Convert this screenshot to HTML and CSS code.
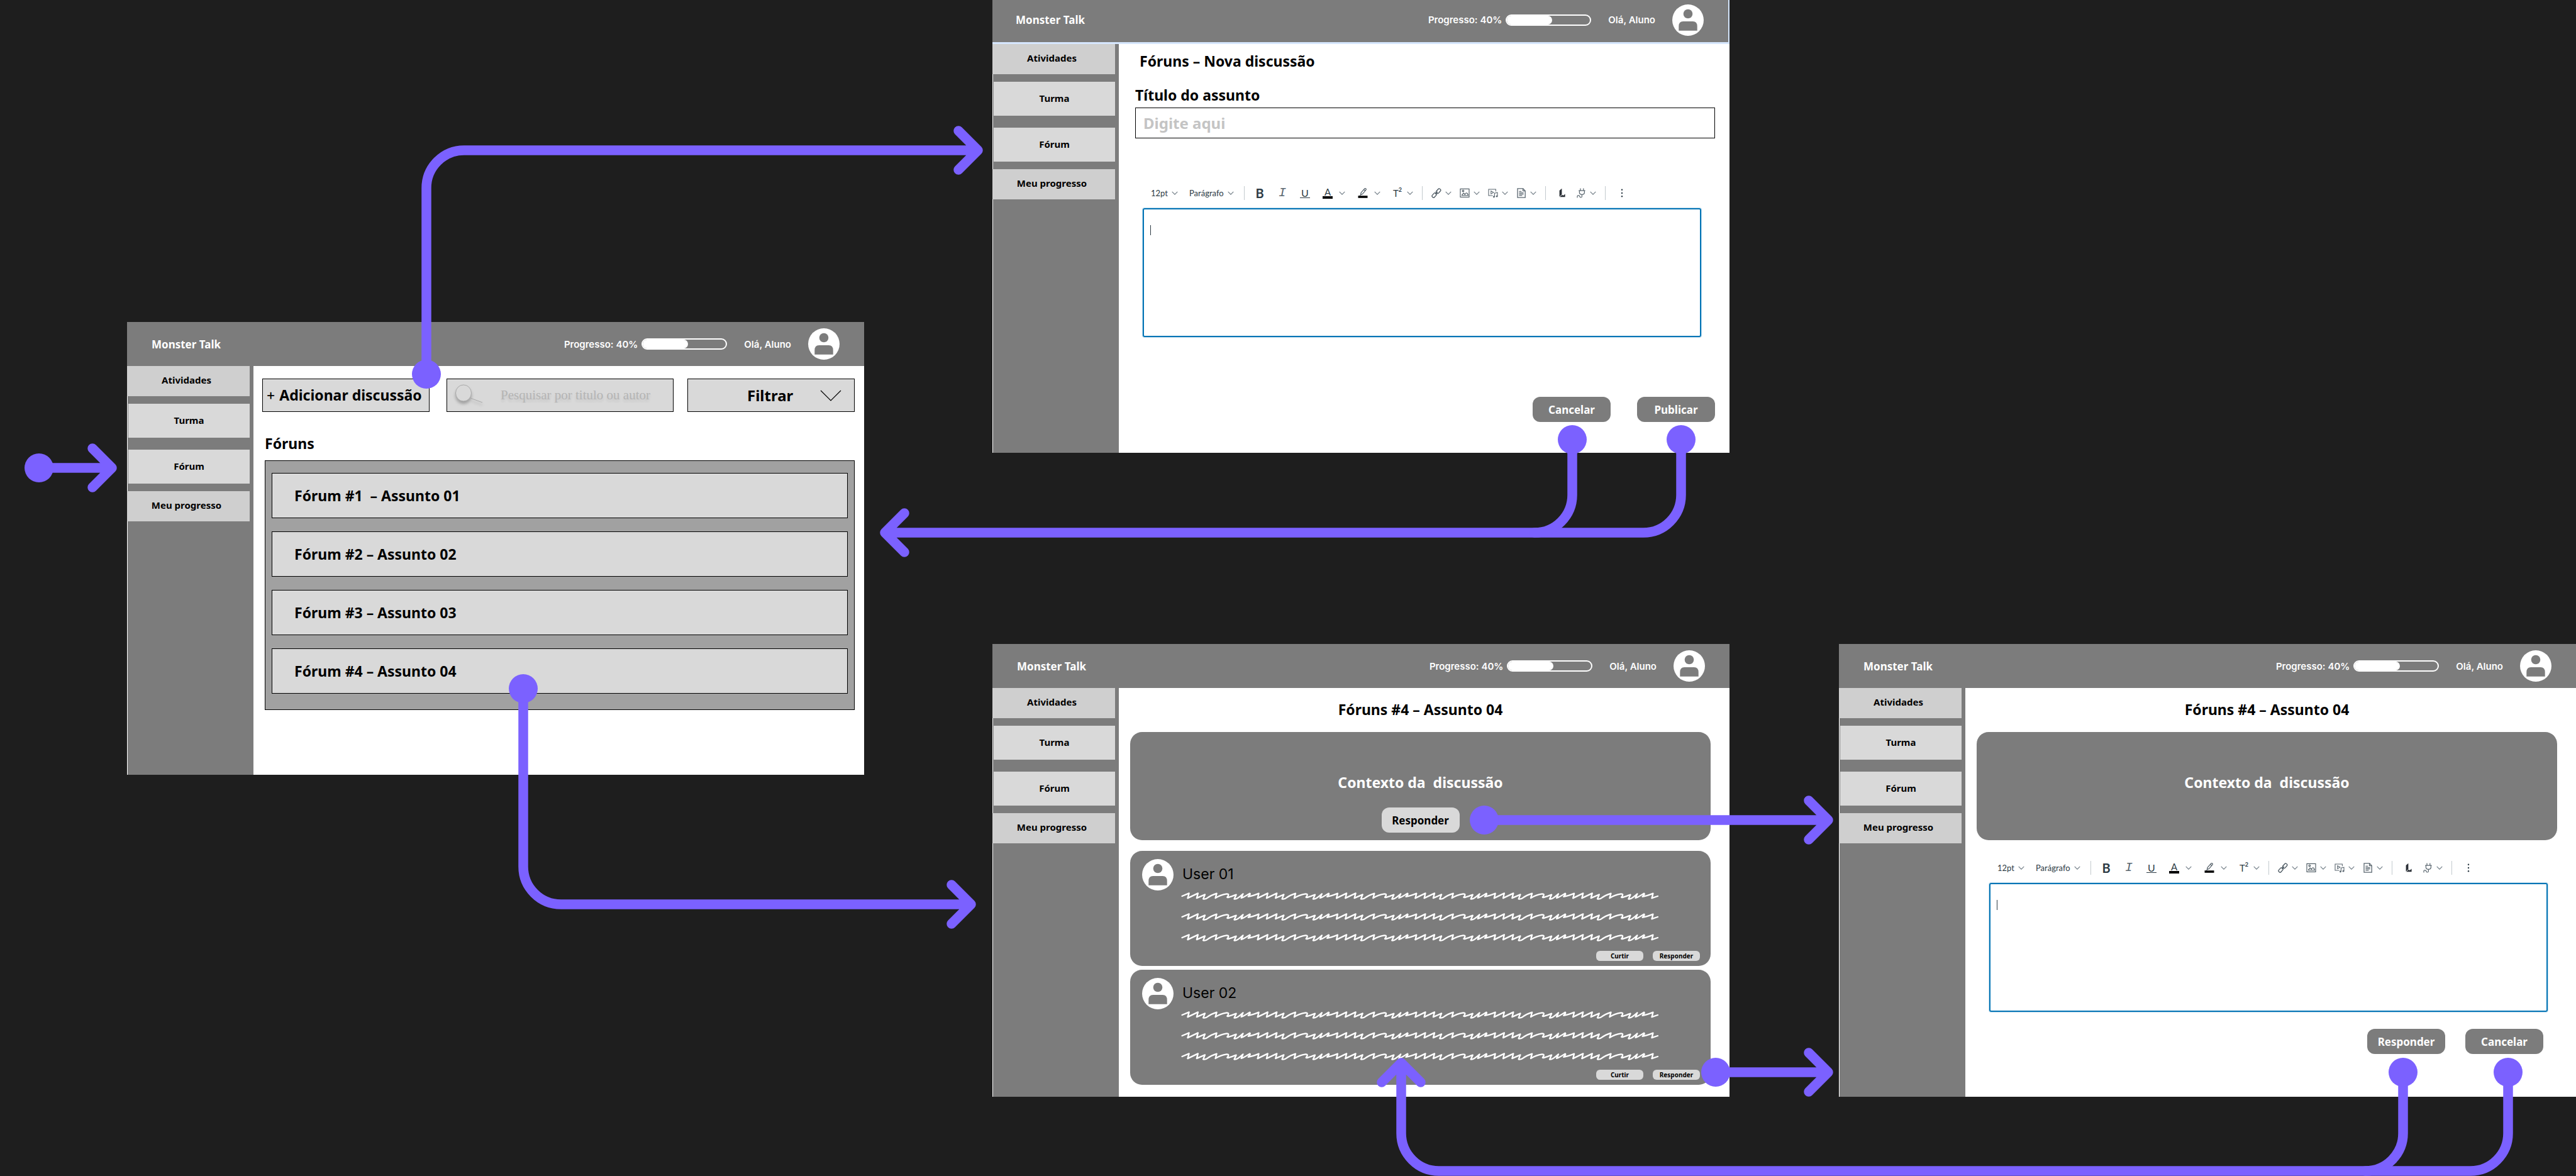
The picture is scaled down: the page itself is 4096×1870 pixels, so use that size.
FILE: index.html
```html
<!DOCTYPE html>
<html lang="pt-BR">
<head>
<meta charset="utf-8">
<title>Monster Talk – Fluxo dos fóruns</title>
<link rel="stylesheet" href="styles.css">
</head>
<body>
<svg class="sprite" aria-hidden="true">
  <symbol id="avatar" viewBox="0 0 50 50">
    <circle cx="25" cy="25" r="25" fill="#fff"/>
    <circle cx="25" cy="15" r="7.3" fill="#7c7c7c"/>
    <path d="M10.3 41.8V35q0-8 7-8h15.4q7 0 7 8v6.8z" fill="#7c7c7c"/>
  </symbol>
  <symbol id="chevron" viewBox="0 0 10 10"><path d="M.7 2.8 5 7.2l4.3-4.4" fill="none" stroke="#6f7b84" stroke-width="1.1"/></symbol>
  <symbol id="pen" viewBox="0 0 16 16">
    <path d="M4.6 10.6 3.4 12M5 7.6 10.8 1q1-.8 2 0t0 2.2L7.4 9.6l-2.8 1zM9.6 2.6l2.2 1.8" fill="none" stroke="#46535c" stroke-width="1.1"/>
    <path d="M.5 12.2h15v3.6H.5z" fill="#000"/>
  </symbol>
  <symbol id="link" viewBox="0 0 16 16">
    <g fill="none" stroke="#46535c" stroke-width="1.3">
      <rect x="-4" y="-2.3" width="8" height="4.6" rx="1.6" transform="translate(11.2 4.8) rotate(-48)"/>
      <rect x="-4" y="-2.3" width="8" height="4.6" rx="1.6" transform="translate(4.6 11.4) rotate(-48)"/>
      <path d="m6.2 9.8 3.6-3.8"/>
    </g>
  </symbol>
  <symbol id="image" viewBox="0 0 16 16">
    <g fill="none" stroke="#46535c" stroke-width="1.1">
      <rect x="1" y="1.4" width="14" height="13"/>
      <circle cx="5.4" cy="4.6" r="1.3"/>
      <path d="M3 11.8h10.4q-.6-3.6-2.6-4-1.6 0-2.4 2.4L6.2 8 3.4 11.4"/>
    </g>
  </symbol>
  <symbol id="media" viewBox="0 0 16 16">
    <g fill="none" stroke="#5b6770" stroke-width="1.1">
      <path d="M7.6 12H1V2h11.4v3.6M4.8 4.6v4.8l4-2.4zM10.4 14V8.2l4.6-1V13"/>
    </g>
    <circle cx="9.4" cy="14" r="1.4" fill="#5b6770"/><circle cx="14" cy="13.2" r="1.4" fill="#5b6770"/>
  </symbol>
  <symbol id="document" viewBox="0 0 16 16">
    <g fill="none" stroke="#5b6770" stroke-width="1.3">
      <path d="M2 .8h8.8l3.4 3.6v10.8H2zM10.6 1v3.6H14"/>
      <path d="M4.4 5.4h4M4.4 7.6h7.2M4.4 9.6h7.2M4.4 11.8h5"/>
    </g>
  </symbol>
  <symbol id="boot" viewBox="0 0 16 16"><path d="M3.6 4 7.4.8v9.4L3.6 13.8zM4 14.2l4-3.4 1.6 1.2 3-2.4v4.6z" fill="#2a2f36"/></symbol>
  <symbol id="plug" viewBox="0 0 16 16"><path d="M7 .4V4M11.8.4V4M4.2 4.2h10.4M5.4 4.4v3.2q.6 2.8 4 2.8t4-2.8V4.4M9.4 10.600v2.6q0 1.8-1.6 1.8T6 13.600t-2-1.8-2 1.8v1.8" fill="none" stroke="#5b6770" stroke-width="1.2"/></symbol>
  <symbol id="more" viewBox="0 0 16 16"><g fill="#2d3b45"><circle cx="8" cy="2.8" r="1.2"/><circle cx="8" cy="8" r="1.2"/><circle cx="8" cy="13.2" r="1.2"/></g></symbol>
  <symbol id="wave" viewBox="0 0 2940 52">
    <defs>
      <path id="wave-body" d="M105 92 168 62 160 92 211 70 200 97Q214 101 230 88 250 74 283 63L275 92Q305 72 345 66 364 66 348 86 344 94 403 71L391 97Q403 104 445 66L434 91Q448 88 486 63 494 66 477 83 500 80 542 63L535 92"/>
      <path id="wave-join" d="M535 92 597 62 590 92"/>
    </defs>
    <g transform="translate(-64 -54)" fill="none" stroke="#fff" stroke-width="9" stroke-linejoin="round" stroke-linecap="round">
      <path d="M70 80 113 62 105 92"/>
      <use href="#wave-body"/><use href="#wave-join"/>
      <use href="#wave-body" x="485"/><use href="#wave-join" x="485"/>
      <use href="#wave-body" x="970"/><use href="#wave-join" x="970"/>
      <use href="#wave-body" x="1455"/><use href="#wave-join" x="1455"/>
      <use href="#wave-body" x="1940"/><use href="#wave-join" x="1940"/>
      <use href="#wave-body" x="2425"/>
      <path d="M2960 92 2996 80"/>
    </g>
  </symbol>
</svg>

<main class="canvas">

  <section class="window window-list">
    <header class="topbar">
      <strong class="brand">Monster Talk</strong>
      <span class="progress-label">Progresso: 40%</span>
      <span class="progress" role="progressbar" aria-label="Progresso" aria-valuenow="40"><span class="progress-fill" style="width: 54%"></span></span>
      <span class="greeting">Olá, Aluno</span>
      <svg class="avatar"><use href="#avatar"/></svg>
    </header>
    <div class="body">
      <nav class="sidebar">
        <button class="nav-edge">Atividades</button>
        <button class="nav-item">Turma</button>
        <button class="nav-item nav-spaced">Fórum</button>
        <button class="nav-edge">Meu progresso</button>
      </nav>
      <div class="content content-list">
        <div class="tools">
          <button class="add"><span class="plus">+</span> Adicionar discussão</button>
          <label class="search">
            <svg class="lens" viewBox="0 0 48 36"><g class="lens-shape"><path d="M25 22 44 29" stroke="#a8a8a8" fill="none"/><ellipse cx="14" cy="14" rx="12.5" ry="13" fill="#d9d9d9" stroke="#a8a8a8"/></g></svg>
            <input type="text" aria-label="Pesquisar" placeholder="Pesquisar por titulo ou autor">
          </label>
          <label class="filter">
            <select aria-label="Filtrar"><option>Filtrar</option></select>
            <svg class="filter-arrow" viewBox="0 0 34 18"><path d="M1 1 17 17 33 1" fill="none" stroke="#000" stroke-width="1.2"/></svg>
          </label>
        </div>
        <h2 class="list-title">Fóruns</h2>
        <div class="forums">
          <button class="forum">Fórum #1&nbsp; – Assunto 01</button>
          <button class="forum">Fórum #2 – Assunto 02</button>
          <button class="forum">Fórum #3 – Assunto 03</button>
          <button class="forum">Fórum #4 – Assunto 04</button>
        </div>
      </div>
    </div>
  </section>

  <section class="window window-new">
    <header class="topbar topbar-selected">
      <strong class="brand">Monster Talk</strong>
      <span class="progress-label">Progresso: 40%</span>
      <span class="progress" role="progressbar" aria-label="Progresso" aria-valuenow="40"><span class="progress-fill" style="width: 54%"></span></span>
      <span class="greeting">Olá, Aluno</span>
      <svg class="avatar"><use href="#avatar"/></svg>
    </header>
    <div class="body">
      <nav class="sidebar">
        <button class="nav-edge">Atividades</button>
        <button class="nav-item">Turma</button>
        <button class="nav-item nav-spaced">Fórum</button>
        <button class="nav-edge">Meu progresso</button>
      </nav>
      <div class="content content-new">
        <h2 class="new-title">Fóruns – Nova discussão</h2>
        <label class="subject-label" for="subject">Título do assunto</label>
        <input class="subject" id="subject" type="text" placeholder="Digite aqui">
        <div class="editor">
          <div class="toolbar">
            <label class="pick pick-size"><select aria-label="Tamanho"><option>12pt</option></select><svg class="chev"><use href="#chevron"/></svg></label>
            <label class="pick pick-block"><select aria-label="Bloco"><option>Parágrafo</option></select><svg class="chev"><use href="#chevron"/></svg></label>
            <i class="sep sep-wide"></i>
            <div class="group">
              <button class="tool"><b class="glyph-b">B</b></button>
              <button class="tool"><em class="glyph-i">I</em></button>
              <button class="tool"><span class="glyph-u">U</span></button>
              <button class="tool tool-color"><span class="glyph-a">A</span><svg class="chev"><use href="#chevron"/></svg></button>
              <button class="tool tool-color"><svg class="icon"><use href="#pen"/></svg><svg class="chev"><use href="#chevron"/></svg></button>
              <button class="tool tool-split"><span class="glyph-t">T<sup>2</sup></span><svg class="chev"><use href="#chevron"/></svg></button>
            </div>
            <i class="sep"></i>
            <div class="group group-insert">
              <button class="tool tool-split" aria-label="Link"><svg class="icon"><use href="#link"/></svg><svg class="chev"><use href="#chevron"/></svg></button>
              <button class="tool tool-split" aria-label="Imagem"><svg class="icon"><use href="#image"/></svg><svg class="chev"><use href="#chevron"/></svg></button>
              <button class="tool tool-split" aria-label="Mídia"><svg class="icon"><use href="#media"/></svg><svg class="chev"><use href="#chevron"/></svg></button>
              <button class="tool tool-split" aria-label="Documento"><svg class="icon"><use href="#document"/></svg><svg class="chev"><use href="#chevron"/></svg></button>
            </div>
            <i class="sep"></i>
            <div class="group group-apps">
              <button class="tool" aria-label="Studio"><svg class="icon"><use href="#boot"/></svg></button>
              <button class="tool tool-split" aria-label="Aplicativos"><svg class="icon"><use href="#plug"/></svg><svg class="chev"><use href="#chevron"/></svg></button>
            </div>
            <i class="sep"></i>
            <button class="tool tool-more" aria-label="Mais"><svg class="icon"><use href="#more"/></svg></button>
          </div>
          <div class="field"><textarea class="textarea" aria-label="Mensagem"></textarea><span class="caret"></span></div>
        </div>
        <div class="actions actions-new">
          <button class="action">Cancelar</button>
          <button class="action">Publicar</button>
        </div>
      </div>
    </div>
  </section>

  <section class="window window-thread">
    <header class="topbar">
      <strong class="brand">Monster Talk</strong>
      <span class="progress-label">Progresso: 40%</span>
      <span class="progress" role="progressbar" aria-label="Progresso" aria-valuenow="40"><span class="progress-fill" style="width: 54%"></span></span>
      <span class="greeting">Olá, Aluno</span>
      <svg class="avatar"><use href="#avatar"/></svg>
    </header>
    <div class="body">
      <nav class="sidebar">
        <button class="nav-edge">Atividades</button>
        <button class="nav-item">Turma</button>
        <button class="nav-item nav-spaced">Fórum</button>
        <button class="nav-edge">Meu progresso</button>
      </nav>
      <div class="content content-thread">
        <h2 class="thread-title">Fóruns #4 – Assunto 04</h2>
        <div class="context">
          <p class="context-text">Contexto da&nbsp; discussão</p>
          <button class="action action-light">Responder</button>
        </div>
        <article class="post">
          <svg class="avatar"><use href="#avatar"/></svg>
          <div class="post-body">
            <h3 class="user">User 01</h3>
            <svg class="wave"><use href="#wave"/></svg>
            <svg class="wave"><use href="#wave"/></svg>
            <svg class="wave"><use href="#wave"/></svg>
            <div class="post-actions"><button class="mini">Curtir</button><button class="mini">Responder</button></div>
          </div>
        </article>
        <article class="post">
          <svg class="avatar"><use href="#avatar"/></svg>
          <div class="post-body">
            <h3 class="user">User 02</h3>
            <svg class="wave"><use href="#wave"/></svg>
            <svg class="wave"><use href="#wave"/></svg>
            <svg class="wave"><use href="#wave"/></svg>
            <div class="post-actions"><button class="mini">Curtir</button><button class="mini">Responder</button></div>
          </div>
        </article>
      </div>
    </div>
  </section>

  <section class="window window-reply">
    <header class="topbar">
      <strong class="brand">Monster Talk</strong>
      <span class="progress-label">Progresso: 40%</span>
      <span class="progress" role="progressbar" aria-label="Progresso" aria-valuenow="40"><span class="progress-fill" style="width: 54%"></span></span>
      <span class="greeting">Olá, Aluno</span>
      <svg class="avatar"><use href="#avatar"/></svg>
    </header>
    <div class="body">
      <nav class="sidebar">
        <button class="nav-edge">Atividades</button>
        <button class="nav-item">Turma</button>
        <button class="nav-item nav-spaced">Fórum</button>
        <button class="nav-edge">Meu progresso</button>
      </nav>
      <div class="content content-thread">
        <h2 class="thread-title">Fóruns #4 – Assunto 04</h2>
        <div class="context">
          <p class="context-text">Contexto da&nbsp; discussão</p>
        </div>
        <div class="editor editor-reply">
          <div class="toolbar">
            <label class="pick pick-size"><select aria-label="Tamanho"><option>12pt</option></select><svg class="chev"><use href="#chevron"/></svg></label>
            <label class="pick pick-block"><select aria-label="Bloco"><option>Parágrafo</option></select><svg class="chev"><use href="#chevron"/></svg></label>
            <i class="sep sep-wide"></i>
            <div class="group">
              <button class="tool"><b class="glyph-b">B</b></button>
              <button class="tool"><em class="glyph-i">I</em></button>
              <button class="tool"><span class="glyph-u">U</span></button>
              <button class="tool tool-color"><span class="glyph-a">A</span><svg class="chev"><use href="#chevron"/></svg></button>
              <button class="tool tool-color"><svg class="icon"><use href="#pen"/></svg><svg class="chev"><use href="#chevron"/></svg></button>
              <button class="tool tool-split"><span class="glyph-t">T<sup>2</sup></span><svg class="chev"><use href="#chevron"/></svg></button>
            </div>
            <i class="sep"></i>
            <div class="group group-insert">
              <button class="tool tool-split" aria-label="Link"><svg class="icon"><use href="#link"/></svg><svg class="chev"><use href="#chevron"/></svg></button>
              <button class="tool tool-split" aria-label="Imagem"><svg class="icon"><use href="#image"/></svg><svg class="chev"><use href="#chevron"/></svg></button>
              <button class="tool tool-split" aria-label="Mídia"><svg class="icon"><use href="#media"/></svg><svg class="chev"><use href="#chevron"/></svg></button>
              <button class="tool tool-split" aria-label="Documento"><svg class="icon"><use href="#document"/></svg><svg class="chev"><use href="#chevron"/></svg></button>
            </div>
            <i class="sep"></i>
            <div class="group group-apps">
              <button class="tool" aria-label="Studio"><svg class="icon"><use href="#boot"/></svg></button>
              <button class="tool tool-split" aria-label="Aplicativos"><svg class="icon"><use href="#plug"/></svg><svg class="chev"><use href="#chevron"/></svg></button>
            </div>
            <i class="sep"></i>
            <button class="tool tool-more" aria-label="Mais"><svg class="icon"><use href="#more"/></svg></button>
          </div>
          <div class="field"><textarea class="textarea" aria-label="Resposta"></textarea><span class="caret"></span></div>
        </div>
        <div class="actions actions-reply">
          <button class="action">Responder</button>
          <button class="action">Cancelar</button>
        </div>
      </div>
    </div>
  </section>

  <!-- Flow arrows between the windows -->
  <svg class="flow" width="4096" height="1870" viewBox="0 0 4096 1870" aria-hidden="true">
    <g fill="none" stroke="#7b61ff" stroke-width="15.5" stroke-linecap="round" stroke-linejoin="round">
      <path d="M62 744H178M147 713l31 31-31 31"/>
      <path d="M678 595V299a60 60 0 0 1 60-60H1555M1524 208l31 31-31 31"/>
      <path d="M832 1095V1378a60 60 0 0 0 60 60H1544M1513 1407l31 31-31 31"/>
      <path d="M2673 699V787a60 60 0 0 1-60 60H1407M1438 816l-31 31 31 31"/>
      <path d="M2500 699V787a60 60 0 0 1-60 60"/>
      <path d="M2360 1304H2907M2876 1273l31 31-31 31"/>
      <path d="M2728 1705H2907M2876 1674l31 31-31 31"/>
      <path d="M3988 1705V1802a60 60 0 0 1-60 60H2288a60 60 0 0 1-60-60V1691M2197 1721l31-31 31 31"/>
      <path d="M3821 1705V1802a60 60 0 0 1-60 60"/>
    </g>
    <g fill="#7b61ff">
      <circle cx="62" cy="744" r="23"/>
      <circle cx="678" cy="595" r="23"/>
      <circle cx="832" cy="1095" r="23"/>
      <circle cx="2500" cy="699" r="23"/>
      <circle cx="2673" cy="699" r="23"/>
      <circle cx="2360" cy="1304" r="23"/>
      <circle cx="2728" cy="1705" r="23"/>
      <circle cx="3821" cy="1705" r="23"/>
      <circle cx="3988" cy="1705" r="23"/>
    </g>
  </svg>
</main>
</body>
</html>
```
FILE: styles.css
```css
* {
  box-sizing: border-box;
}

body {
  margin: 0;
  background: #1e1e1e;
  color: #000;
  font-family: "Noto Sans", sans-serif;
}

h2,
h3,
p {
  margin: 0;
}

button,
input,
select,
textarea {
  margin: 0;
  padding: 0;
  border: 0;
  border-radius: 0;
  background: none;
  color: inherit;
  font: inherit;
}

svg {
  display: block;
  flex: none;
}

.sprite {
  position: absolute;
  width: 0;
  height: 0;
}

.canvas {
  position: relative;
  min-height: 100vh;
  overflow: hidden;
}

.flow {
  position: absolute;
  top: 0;
  left: 0;
  pointer-events: none;
}

/* Windows placed on the canvas */
.window {
  position: absolute;
  display: flex;
  flex-direction: column;
  width: 1172px;
  min-height: 720px;
  background: #fff;
}

.window-list {
  left: 202px;
  top: 512px;
}

.window-new {
  left: 1578px;
  top: 0;
}

.window-thread {
  left: 1578px;
  top: 1024px;
}

.window-reply {
  left: 2924px;
  top: 1024px;
}

/* Top bar */
.topbar {
  display: flex;
  align-items: center;
  height: 70px;
  padding: 0 39px;
  background: #7c7c7c;
  color: #fff;
  font-family: Inter, sans-serif;
  font-size: 15px;
  font-weight: 600;
}

.topbar-selected {
  padding: 0 39px 4px 37px;
  border-right: 2px solid #d6e7fe;
  border-bottom: 3px solid #d6e7fe;
}

.brand {
  margin-right: auto;
  font-family: "Noto Sans", sans-serif;
  font-size: 17px;
  font-weight: 700;
}

.progress {
  width: 136px;
  height: 18px;
  margin: 0 27px 0 6px;
  border: 2px solid #fff;
  border-radius: 9px;
  overflow: hidden;
}

.progress-fill {
  display: block;
  height: 100%;
  border-radius: 0 7px 7px 0;
  background: #fff;
}

.avatar {
  width: 50px;
  height: 50px;
}

.topbar .avatar {
  margin-left: 27px;
}

/* Sidebar */
.body {
  display: flex;
  flex: 1;
}

.sidebar {
  display: flex;
  flex: none;
  flex-direction: column;
  gap: 12px;
  width: 201px;
  padding-right: 6px;
  background: #7c7c7c;
  font-size: 15px;
  font-weight: 700;
  box-shadow: inset 1px 0 #fff;
}

.nav-edge {
  height: 48px;
  padding: 0 6px 4px 0;
  background: #cfcfcf;
}

.nav-item {
  height: 54px;
  margin-left: 2px;
  padding-bottom: 2px;
  background: #d9d9d9;
}

.nav-spaced {
  margin-top: 7px;
}

.content {
  display: flex;
  flex: 1;
  flex-direction: column;
  min-width: 0;
}

/* Forum list */
.content-list {
  padding: 20px 15px 0 14px;
}

.tools {
  display: flex;
  height: 53px;
}

.add,
.search,
.filter {
  border: 1px solid #000;
  background: #d9d9d9;
}

.add {
  display: flex;
  align-items: center;
  gap: 6px;
  width: 266px;
  padding: 0 0 2px 5px;
  font-size: 23px;
  font-weight: 700;
  line-height: 32px;
  white-space: nowrap;
}

.plus {
  font-family: Inter, sans-serif;
  font-weight: 400;
}

.search {
  display: flex;
  flex: 1;
  align-items: center;
  gap: 25px;
  margin: 0 22px 0 27px;
  padding-left: 12px;
}

.lens {
  width: 48px;
  height: 36px;
  overflow: visible;
}

.lens-shape {
  filter: drop-shadow(0 4px 2px rgba(0, 0, 0, 0.25));
}

.search input {
  width: 100%;
  height: 100%;
  font-family: "Liberation Serif", serif;
  font-size: 21px;
}

.search input::placeholder {
  color: #b4b4b4;
  text-shadow: 0 4px 4px rgba(0, 0, 0, 0.1);
}

.filter {
  display: flex;
  align-items: center;
  width: 266px;
  padding: 0 20px 0 94px;
}

.filter select {
  flex: 1;
  appearance: none;
  font-size: 24px;
  font-weight: 700;
  line-height: 32px;
}

.filter-arrow {
  width: 34px;
  height: 18px;
}

.list-title {
  margin: 35px 0 0 4px;
  font-size: 23px;
  line-height: 30px;
}

.forums {
  display: flex;
  flex-direction: column;
  gap: 21px;
  margin: 12px 0 0 4px;
  padding: 19px 10px 25px;
  border: 1px solid #000;
  background: #a1a1a1;
}

.forum {
  height: 72px;
  padding-left: 35px;
  border: 1px solid #000;
  background: #d9d9d9;
  font-size: 23px;
  font-weight: 700;
  text-align: left;
}

/* New discussion form */
.content-new {
  padding: 12px 23px 0 26px;
}

.new-title {
  padding-left: 7px;
  font-size: 23px;
  line-height: 30px;
}

.subject-label {
  margin-top: 24px;
  font-size: 23px;
  font-weight: 700;
  line-height: 30px;
}

.subject {
  height: 49px;
  margin-top: 5px;
  padding: 0 12px;
  border: 1px solid #000;
  font-size: 24px;
  font-weight: 700;
}

.subject::placeholder {
  color: #c4c4c4;
}

.editor {
  margin: 74px 22px 0 12px;
}

.toolbar {
  display: flex;
  align-items: center;
  height: 26px;
  padding-left: 13px;
  color: #2d3b45;
  font-family: Lato, sans-serif;
  font-size: 13px;
}

.pick {
  display: flex;
  align-items: center;
  justify-content: space-between;
}

.pick select {
  appearance: none;
}

.pick-size {
  width: 43px;
}

.pick-block {
  width: 71px;
  margin-left: 18px;
}

.chev {
  width: 10px;
  height: 10px;
}

.sep {
  width: 1px;
  height: 22px;
  margin: 0 14px;
  background: #c3cace;
}

.sep-wide {
  margin: 0 16px;
}

.group {
  display: flex;
  gap: 20px;
}

.group-insert {
  gap: 13px;
}

.group-apps {
  gap: 14px;
  padding-left: 4px;
}

.tool {
  display: flex;
  align-items: center;
  justify-content: space-between;
  width: 16px;
  height: 20px;
}

.tool-color {
  width: 36px;
}

.tool-split {
  width: 32px;
}

.tool-more {
  margin-left: 4px;
}

.icon {
  width: 16px;
  height: 16px;
}

.glyph-b,
.glyph-i,
.glyph-u,
.glyph-a {
  width: 16px;
  text-align: center;
}

.glyph-b {
  font-size: 20px;
  line-height: 20px;
}

.glyph-i {
  color: #5b6770;
  font-family: "Liberation Mono", monospace;
  font-size: 20px;
  line-height: 20px;
}

.glyph-u {
  border-bottom: 1px solid #2d3b45;
  font-size: 16px;
  line-height: 15px;
}

.glyph-a {
  border-bottom: 4px solid #000;
  font-size: 15px;
  line-height: 13px;
}

.glyph-t {
  display: flex;
  font-size: 15px;
  line-height: 20px;
}

.glyph-t sup {
  font-size: 9px;
  font-weight: 700;
  line-height: 10px;
}

.field {
  position: relative;
  margin-top: 11px;
}

.textarea {
  display: block;
  width: 100%;
  height: 205px;
  padding: 24px 12px;
  border: 2px solid #0374b5;
  border-radius: 3px;
  box-shadow: 0 0 0 1px rgba(3, 116, 181, 0.25);
  resize: none;
}

.caret {
  position: absolute;
  left: 12px;
  top: 27px;
  width: 1px;
  height: 16px;
  background: #2d3b45;
}

/* Buttons */
.actions {
  display: flex;
  justify-content: flex-end;
}

.actions-new {
  gap: 42px;
  margin-top: 95px;
}

.actions-reply {
  gap: 32px;
  margin: 27px 22px 0 0;
}

.action {
  width: 124px;
  height: 40px;
  border-radius: 12px;
  background: #7c7c7c;
  color: #fff;
  font-size: 17px;
  font-weight: 700;
}

.action-light {
  background: #d9d9d9;
  color: #000;
}

/* Thread */
.content-thread {
  padding: 19px 30px 0 18px;
}

.thread-title {
  font-size: 23px;
  line-height: 30px;
  text-align: center;
}

.context {
  display: flex;
  flex-direction: column;
  align-items: center;
  height: 172px;
  margin-top: 21px;
  padding-top: 65px;
  border-radius: 19px;
  background: #7c7c7c;
  color: #fff;
}

.context-text {
  margin-bottom: 25px;
  font-size: 23px;
  font-weight: 700;
  line-height: 30px;
}

.post {
  display: flex;
  gap: 12px;
  height: 183px;
  margin-top: 6px;
  padding: 13px 17px 0 19px;
  border-radius: 19px;
  background: #7c7c7c;
}

.context + .post {
  margin-top: 17px;
}

.post-body {
  display: flex;
  flex: 1;
  flex-direction: column;
}

.user {
  margin: 8px 0 12px;
  padding-left: 2px;
  font-family: Inter, sans-serif;
  font-size: 23px;
  font-weight: 400;
  line-height: 32px;
}

.wave {
  width: 760px;
  height: 14px;
  margin-bottom: 19px;
}

.post-actions {
  display: flex;
  justify-content: flex-end;
  gap: 15px;
  margin-top: -5px;
}

.mini {
  width: 75px;
  height: 16px;
  border-radius: 6px;
  background: #d9d9d9;
  font-size: 10px;
  font-weight: 700;
  line-height: 16px;
}

.editor-reply {
  margin: 31px 15px 0 20px;
}
```
